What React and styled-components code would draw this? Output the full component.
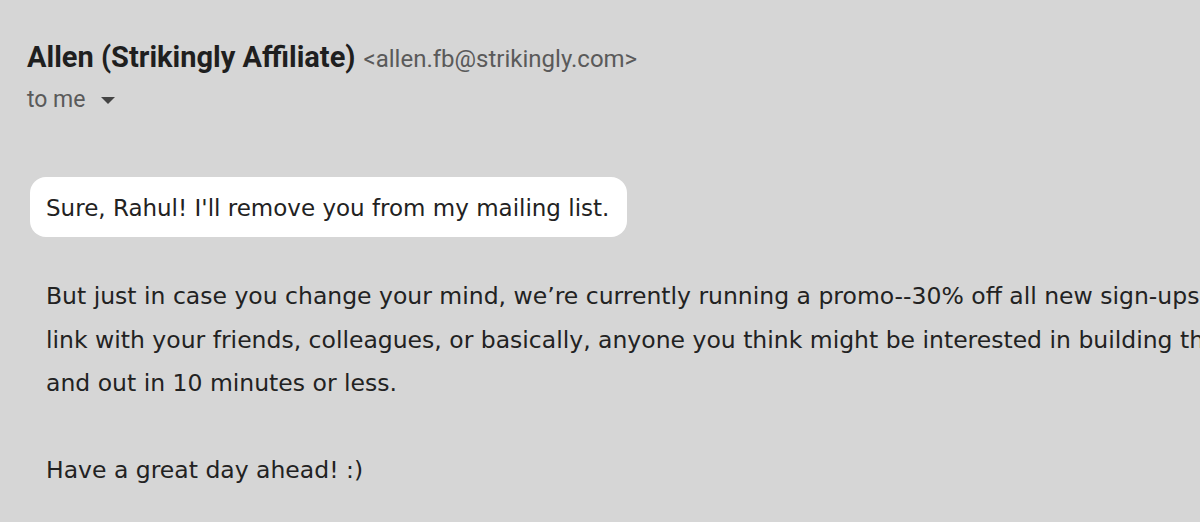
import React from "react";
import styled, { createGlobalStyle } from "styled-components";

const GlobalStyle = createGlobalStyle`
  html, body {
    margin: 0;
    padding: 0;
    background: #d6d6d6;
  }
  body {
    width: 1200px;
    height: 522px;
    overflow: hidden;
  }
`;

const Page = styled.div`
  width: 1200px;
  height: 522px;
  overflow: hidden;
  background: #d6d6d6;
  padding: 40px 0 0 27px;
  box-sizing: border-box;
`;

const Header = styled.div`
  display: flex;
  flex-direction: column;
  gap: 10px;
`;

const FromRow = styled.div`
  display: flex;
  align-items: baseline;
  gap: 8px;
  line-height: 34px;
  white-space: nowrap;
`;

const Sender = styled.span`
  font-family: Roboto, "Liberation Sans", sans-serif;
  font-weight: 700;
  font-size: 29px;
  color: #1f1f1f;
`;

const Email = styled.span`
  font-family: Roboto, "Liberation Sans", sans-serif;
  font-size: 24px;
  color: #5a5a5a;
`;

const ToRow = styled.div`
  display: flex;
  align-items: center;
  gap: 15px;
  line-height: 28px;
  font-family: Roboto, "Liberation Sans", sans-serif;
  font-size: 23px;
  color: #5a5a5a;
`;

const Caret = styled.svg`
  margin-top: 1px;
`;

const Body = styled.div`
  margin-top: 63px;
  margin-left: 3px;
  font-family: "DejaVu Sans", Verdana, sans-serif;
  color: #222;
`;

const Highlight = styled.div`
  display: inline-block;
  background: #fff;
  border-radius: 16px;
  padding: 16px 18px 14px 16px;
  font-size: 23px;
  line-height: 30px;
  white-space: nowrap;
`;

const Paragraph = styled.div`
  margin-top: 38px;
  padding-left: 16px;
  font-size: 23.5px;
  line-height: 43.5px;
`;

const Line = styled.div`
  white-space: nowrap;
  min-height: 43.5px;
`;

export default function App() {
  return (
    <>
      <GlobalStyle />
      <Page>
        <Header>
          <FromRow>
            <Sender>Allen (Strikingly Affiliate)</Sender>
            <Email>&lt;allen.fb@strikingly.com&gt;</Email>
          </FromRow>
          <ToRow>
            <span>to me</span>
            <Caret width="14" height="8" viewBox="0 0 14 8">
              <path d="M0 0 L14 0 L7 7 Z" fill="#444" />
            </Caret>
          </ToRow>
        </Header>
        <Body>
          <Highlight>Sure, Rahul! I'll remove you from my mailing list.</Highlight>
          <Paragraph>
            <Line>But just in case you change your mind, we’re currently running a promo--30% off all new sign-ups</Line>
            <Line>link with your friends, colleagues, or basically, anyone you think might be interested in building the</Line>
            <Line>and out in 10 minutes or less.</Line>
            <Line />
            <Line>Have a great day ahead! :)</Line>
          </Paragraph>
        </Body>
      </Page>
    </>
  );
}
